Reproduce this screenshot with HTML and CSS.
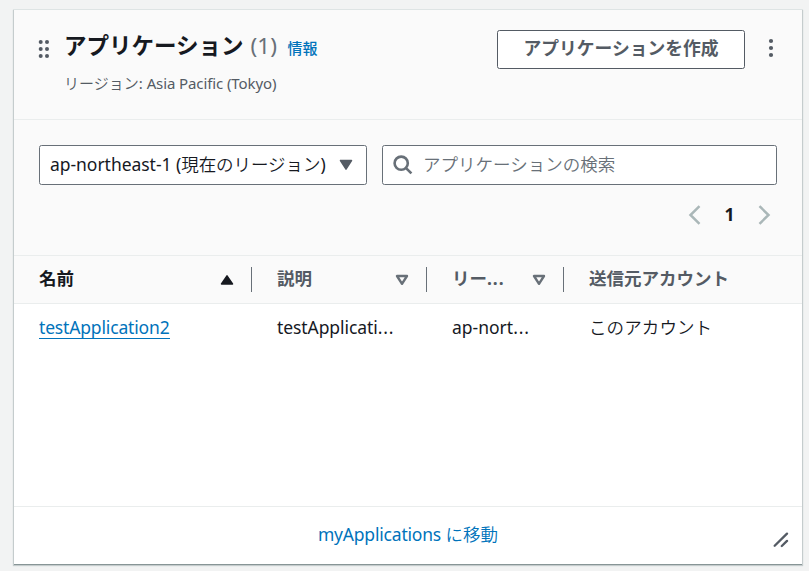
FILE: index.html
```html
<!DOCTYPE html>
<html lang="ja">
<head>
<meta charset="utf-8">
<title>アプリケーション</title>
<link rel="stylesheet" href="styles.css">
</head>
<body>
<main class="widget">
  <header class="head">
    <svg class="grip" width="12" height="20" viewBox="0 0 12 20"><g fill="#545b64"><circle cx="2.7" cy="3" r="2"/><circle cx="9" cy="3" r="2"/><circle cx="2.7" cy="10" r="2"/><circle cx="9" cy="10" r="2"/><circle cx="2.7" cy="17" r="2"/><circle cx="9" cy="17" r="2"/></g></svg>
    <div class="titles">
      <div class="title-row"><h1>アプリケーション</h1><span class="count">(1)</span><a class="info">情報</a></div>
      <p class="region"><span class="light">リージョン</span>: <span class="region-name">Asia Pacific (Tokyo)</span></p>
    </div>
    <button class="create">アプリケーションを作成</button>
    <svg class="more" width="6" height="20" viewBox="0 0 6 20"><g fill="#545b64"><circle cx="3" cy="3" r="2.1"/><circle cx="3" cy="10" r="2.1"/><circle cx="3" cy="17" r="2.1"/></g></svg>
  </header>
  <section class="tools">
    <div class="filters">
      <div class="select"><span class="select-text">ap-northeast-1 (<span class="light">現在のリージョン</span>)</span>
        <svg width="14" height="12" viewBox="0 0 14 12"><path d="M1.5 1.5h11L7 10.2z" fill="#545b64" stroke="#545b64" stroke-width="1.5" stroke-linejoin="round"/></svg>
      </div>
      <div class="search">
        <svg width="20" height="20" viewBox="0 0 20 20" fill="none" stroke="#687078" stroke-width="2.6"><circle cx="8.2" cy="8.2" r="6.6"/><path d="M12.8 12.8l5.6 5.6"/></svg>
        <span class="placeholder light">アプリケーションの検索</span>
      </div>
    </div>
    <nav class="pages">
      <svg width="13" height="20" viewBox="0 0 13 20"><path d="M11.5 1.2L2.5 10l9 8.8" fill="none" stroke="#aab7b8" stroke-width="2.5"/></svg>
      <b>1</b>
      <svg width="13" height="20" viewBox="0 0 13 20"><path d="M1.5 1.2L10.5 10l-9 8.8" fill="none" stroke="#aab7b8" stroke-width="2.5"/></svg>
    </nav>
  </section>
  <div class="row row-head">
    <div class="cell sorted"><span>名前</span><svg width="14" height="12" viewBox="0 0 14 12"><path d="M1.5 10h11L7 1.8z" fill="#16191f" stroke="#16191f" stroke-width="1.5" stroke-linejoin="round"/></svg></div>
    <div class="cell"><span>説明</span><svg width="14" height="12" viewBox="0 0 14 12"><path d="M2 2h10L7 9.8z" fill="none" stroke="#687078" stroke-width="2.4" stroke-linejoin="round"/></svg></div>
    <div class="cell"><span>リー<span class="dots">...</span></span><svg width="14" height="12" viewBox="0 0 14 12"><path d="M2 2h10L7 9.8z" fill="none" stroke="#687078" stroke-width="2.4" stroke-linejoin="round"/></svg></div>
    <div class="cell"><span>送信元アカウント</span></div>
  </div>
  <div class="row row-body">
    <div class="cell"><a class="app-link">testApplication2</a></div>
    <div class="cell"><span><span class="desc">testApplicati</span><span class="dots">...</span></span></div>
    <div class="cell"><span>ap-nort<span class="dots">...</span></span></div>
    <div class="cell"><span class="light account">このアカウント</span></div>
  </div>
  <footer class="foot">
    <a><span class="foot-name">myApplications</span> <span class="light">に移動</span></a>
    <svg class="resize" width="16" height="16" viewBox="0 0 16 16" fill="none" stroke="#545b64" stroke-width="2.3" stroke-linecap="round"><path d="M1.7 13.8L14 1.6M8.8 14l5.2-5.1"/></svg>
  </footer>
</main>
</body>
</html>
```
FILE: styles.css
```css
* { box-sizing: border-box; }
body {
  margin: 0;
  height: 571px;
  padding: 10px 7px 7px 14px;
  overflow: hidden;
  background: #f2f3f3;
  color: #16191f;
  font: 17.5px/28px "Noto Sans", "Noto Sans CJK JP", sans-serif;
}
h1, p { margin: 0; }
svg { display: block; flex: none; }
a { color: #0073bb; }
.light { font-family: "Noto Sans CJK JP", sans-serif; font-weight: 350; line-height: 1; }
.dots { letter-spacing: 0.9px; }
.widget {
  display: flex;
  flex-direction: column;
  width: 788px;
  height: 554px;
  background: #fff;
  box-shadow: 0 1px 0 0 #879596, 0 1px 1px 1px #c5cccd, 0 0 0 1px #e4e8e8;
}
.head {
  display: flex;
  align-items: flex-start;
  height: 110px;
  padding: 20px 28px 0 24px;
  background: #fafafa;
  border-bottom: 1px solid #eaeded;
}
.grip { margin-top: 9px; }
.titles { flex: 1; margin-left: 14px; white-space: nowrap; }
.title-row { display: flex; align-items: baseline; height: 35px; line-height: 32px; }
h1 { font-size: 22.5px; font-weight: 700; }
.count { width: 27px; margin-left: 7px; color: #687078; font-size: 22.5px; }
.info { margin-left: 10px; font-size: 15px; font-weight: 500; }
.region { color: #545b64; font-size: 15px; line-height: 36px; }
.region-name { letter-spacing: -0.1px; }
.create {
  width: 248px;
  height: 39px;
  padding: 0 0 2px;
  border: 1px solid #545b64;
  border-radius: 2.5px;
  background: #fff;
  color: #545b64;
  font: 700 17.8px/35px "Noto Sans", "Noto Sans CJK JP", sans-serif;
}
.more { margin: 8px 0 0 23px; }
.tools { height: 135px; padding: 25px 25px 0; background: #fafafa; }
.filters { display: flex; gap: 15px; height: 40px; }
.select, .search {
  display: flex;
  align-items: center;
  border: 1px solid #687078;
  border-radius: 2.5px;
  background: #fff;
  white-space: nowrap;
}
.select { justify-content: space-between; width: 328px; padding: 0 13px 0 10px; }
.select-text { padding-bottom: 2px; letter-spacing: -0.04px; }
.search { flex: 1; gap: 10px; padding-left: 10px; color: #687078; }
.placeholder { padding-bottom: 2px; }
.pages { display: flex; align-items: center; justify-content: flex-end; height: 28px; margin-top: 16px; padding-right: 6px; }
.pages b { width: 57px; padding-bottom: 2px; text-align: center; }
.row { display: grid; grid-template-columns: 238px 175px 137px 238px; }
.row-head {
  height: 49px;
  background: #fafafa;
  border-top: 1px solid #eaeded;
  border-bottom: 1px solid #eaeded;
  color: #545b64;
  font-weight: 700;
}
.cell { display: flex; align-items: center; justify-content: space-between; min-width: 0; padding: 0 17px 0 25px; white-space: nowrap; }
.row-head .cell { height: 25px; margin-top: 11px; border-right: 1px solid #687078; }
.row-head .cell:last-child { border-right: 0; }
.row-head .cell > span { padding-bottom: 3px; }
.sorted { color: #16191f; }
.row-body { flex: 1; grid-template-rows: 46px; }
.app-link { line-height: 22px; border-bottom: 1px solid #0073bb; letter-spacing: -0.16px; }
.desc { letter-spacing: -0.08px; }
.account { letter-spacing: 0.1px; }
.foot { position: relative; height: 58px; border-top: 1px solid #eaeded; text-align: center; line-height: 55px; }
.foot-name { letter-spacing: -0.2px; }
.resize { position: absolute; right: 13px; bottom: 16px; }
```
